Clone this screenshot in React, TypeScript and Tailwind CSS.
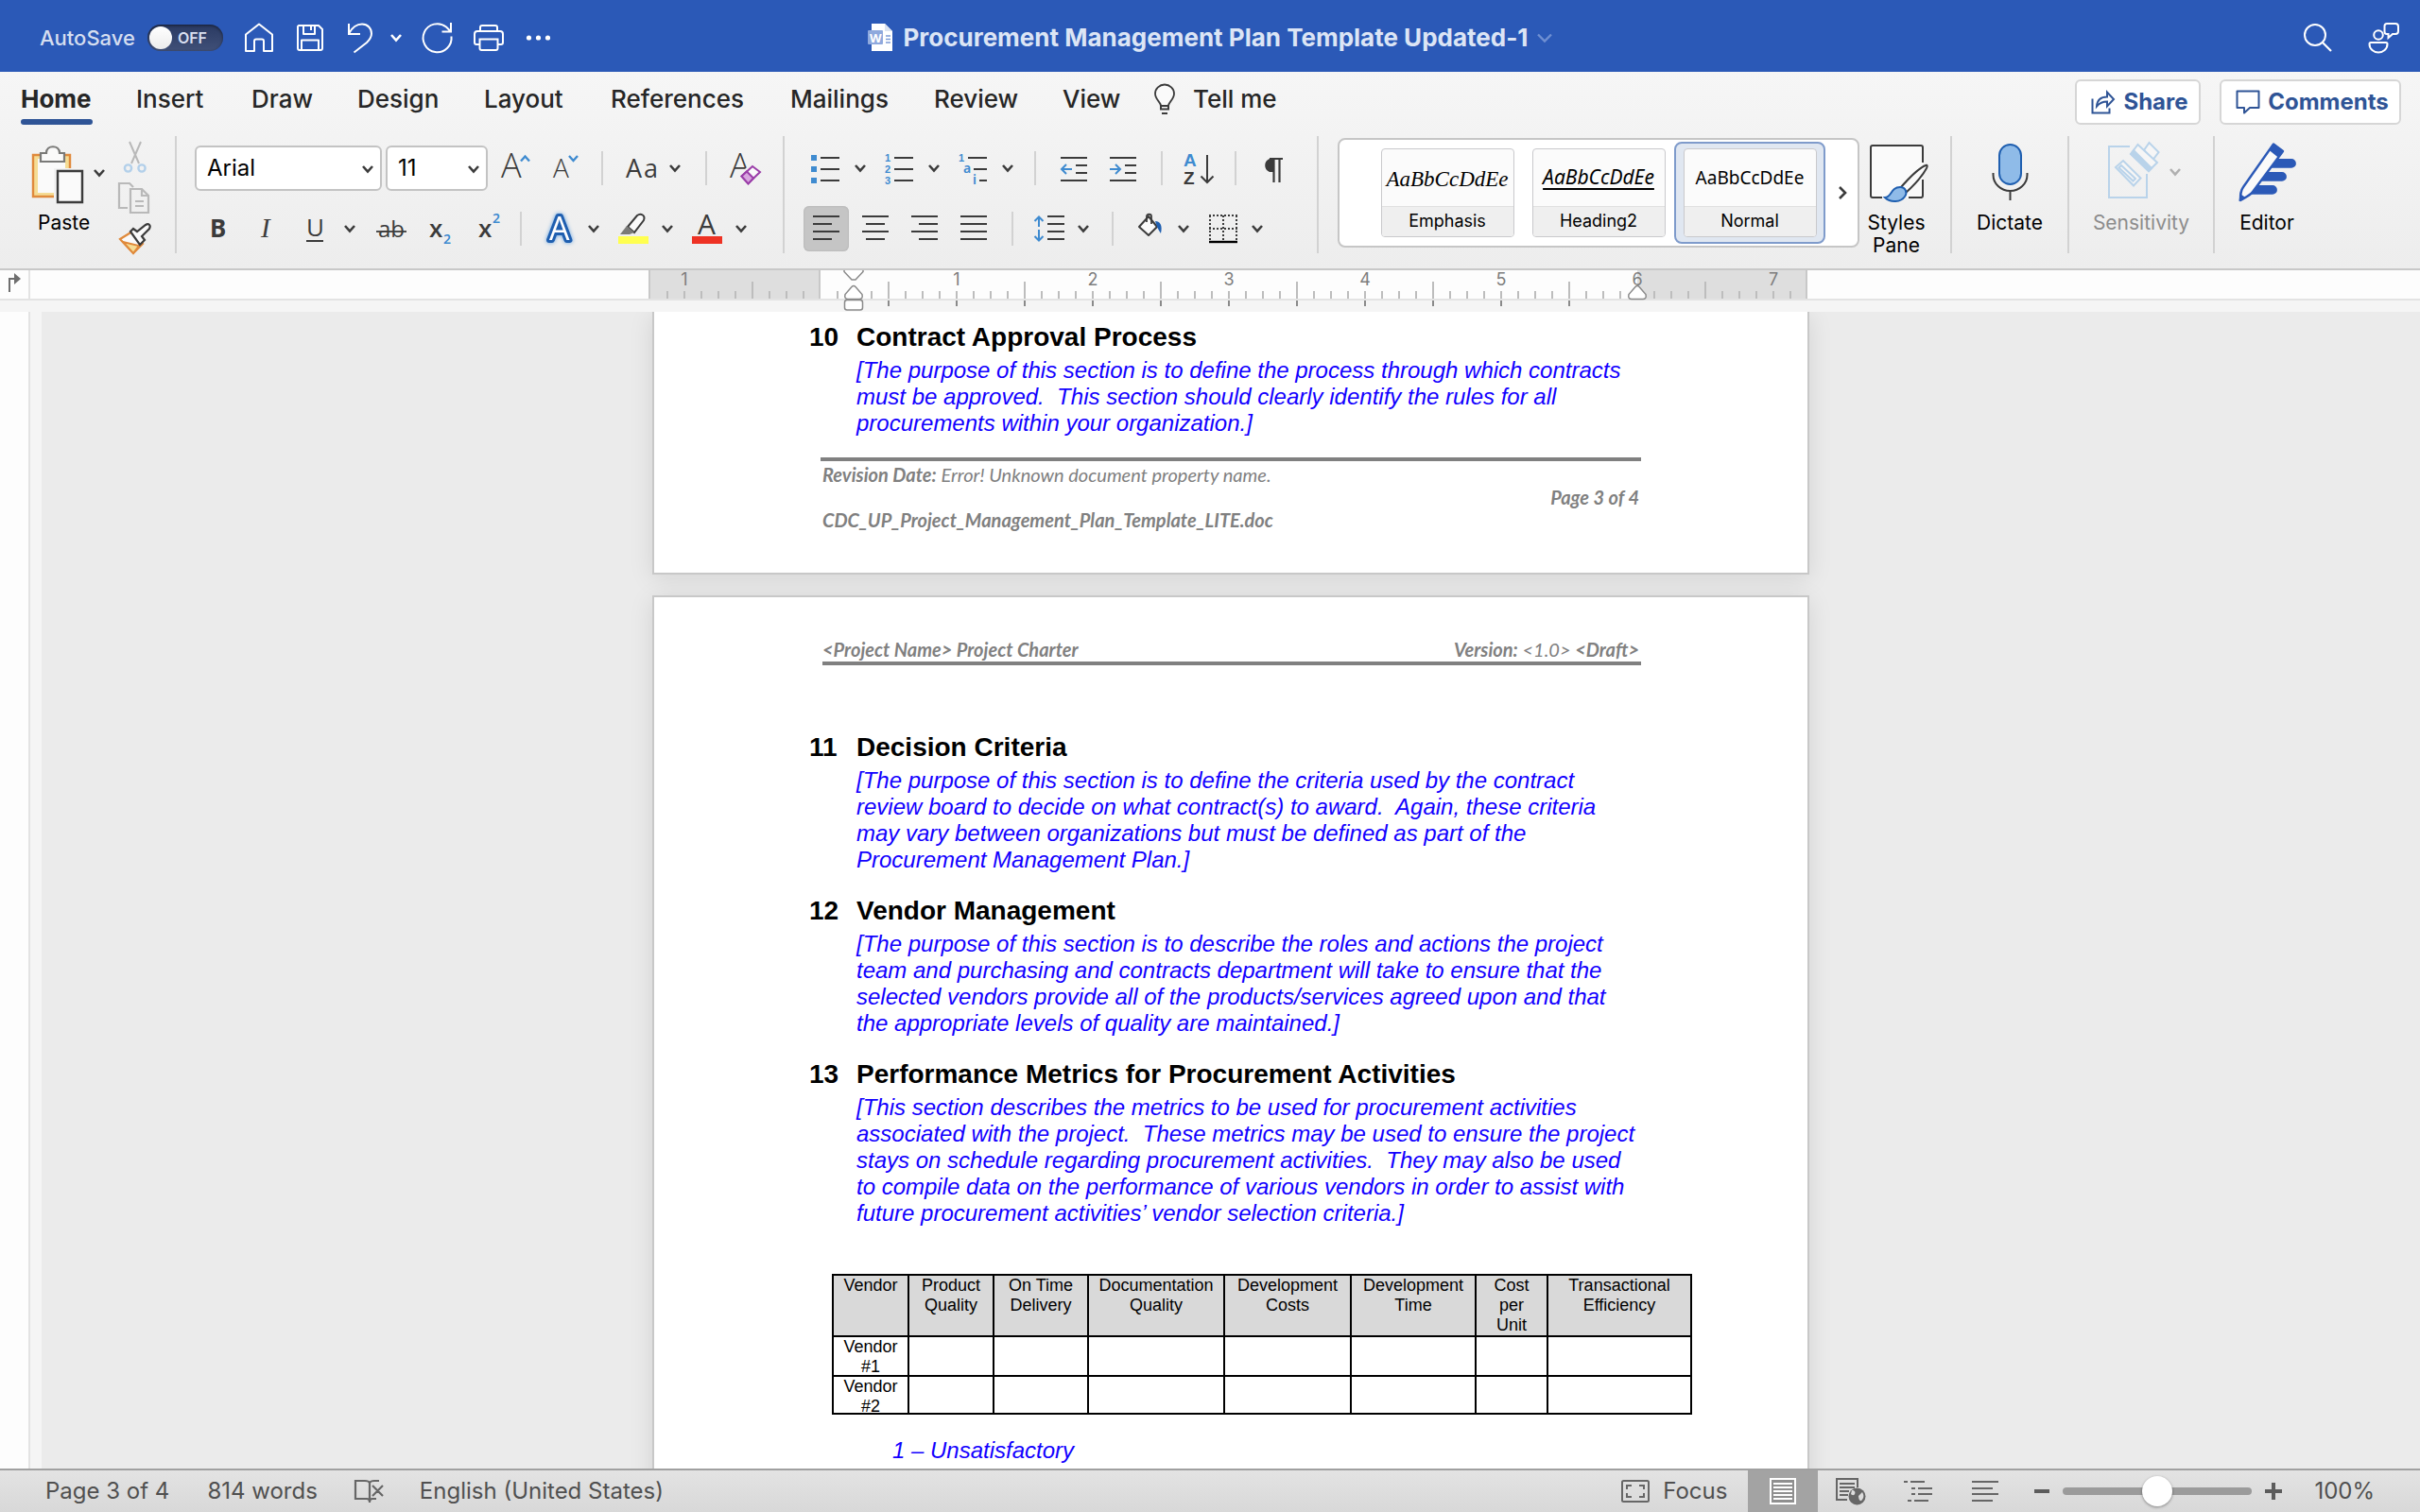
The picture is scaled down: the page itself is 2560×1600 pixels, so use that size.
import React from "react";

type IconProps = { children: React.ReactNode; w?: number; h?: number };

function Icon({ children, w = 32, h = 32 }: IconProps) {
  return (
    <svg width={w} height={h} viewBox={`0 0 ${w} ${h}`} fill="none" aria-hidden="true" className="block shrink-0 overflow-visible">
      {children}
    </svg>
  );
}

function Chevron({ className = "stroke-[#3b3b3b]" }: { className?: string }) {
  return (
    <svg width="14" height="10" viewBox="0 0 14 10" fill="none" aria-hidden="true" className="block shrink-0">
      <path d="M2 2l5 5.5L12 2" strokeWidth="2.6" className={className} />
    </svg>
  );
}

function Tool({ label, children, className = "w-8" }: { label: string; children: React.ReactNode; className?: string }) {
  return (
    <button type="button" aria-label={label} className={`flex h-12 shrink-0 items-center justify-center ${className}`}>
      {children}
    </button>
  );
}

function Split({ label, children }: { label: string; children: React.ReactNode }) {
  return (
    <div className="flex h-12 shrink-0 items-center">
      <Tool label={label}>{children}</Tool>
      <button type="button" aria-label={`${label} options`} className="ml-3 flex h-12 w-4 items-center justify-center">
        <Chevron />
      </button>
    </div>
  );
}

const Sep = () => <div className="h-9 w-0.5 shrink-0 bg-[#d2d2d2]" />;
const GroupSep = () => <div className="mt-2 h-[124px] w-0.5 shrink-0 bg-[#d2d2d2]" />;

function Glyph({
  x,
  y,
  size,
  children,
  fill = "#3b3b3b",
  weight = 400,
  family = "Noto Sans, sans-serif",
  italic = false,
}: {
  x: number;
  y: number;
  size: number;
  children: string;
  fill?: string;
  weight?: number;
  family?: string;
  italic?: boolean;
}) {
  return (
    <text x={x} y={y} fontSize={size} fill={fill} fontWeight={weight} fontFamily={family} fontStyle={italic ? "italic" : "normal"}>
      {children}
    </text>
  );
}

function TitleBar() {
  return (
    <header className="relative flex h-[76px] shrink-0 items-center bg-[#2b59b7] pl-[42px] pr-[22px] pt-1 text-white">
      <label className="flex items-center gap-[13px] text-[22px] font-medium text-[#d5def0]">
        AutoSave
        <span className="relative block h-7 w-20">
          <input
            type="checkbox"
            role="switch"
            aria-label="AutoSave"
            className="block h-7 w-20 appearance-none rounded-full bg-linear-to-b from-[#2a3a62] to-[#405078] shadow-[inset_0_1px_3px_rgba(0,0,0,0.5)]"
          />
          <span className="pointer-events-none absolute left-0.5 top-0.5 h-6 w-6 rounded-full bg-linear-to-b from-white to-[#ececec]" />
          <span className="pointer-events-none absolute left-8 top-0 text-base leading-7 font-semibold text-[#d8dff0]">OFF</span>
        </span>
      </label>
      <nav aria-label="Quick access" className="ml-[22px] flex items-center stroke-white">
        <button type="button" aria-label="Home">
          <Icon>
            <path d="M2 30V12.5L16 1.500l14 11V30h-9V19.500a2 2 0 0 0-2-2h-6a2 2 0 0 0-2 2V30z" strokeWidth="2" strokeLinejoin="round" />
          </Icon>
        </button>
        <button type="button" aria-label="Save" className="ml-[22px]">
          <Icon>
            <path d="M4 3h21l4 4v20a2 2 0 0 1-2 2H5a2 2 0 0 1-2-2V4zM9 3v9h12V3M7 29V18.500h18V29M17 4v4" strokeWidth="2" strokeLinejoin="round" />
          </Icon>
        </button>
        <button type="button" aria-label="Undo" className="ml-[22px]">
          <Icon>
            <path d="M3 1v11h12M3 11.500C6 6 10 1.500 17 1.500c6 0 10 4.500 10 10 0 4-2 6.500-5 9.500L8.500 31.500" strokeWidth="2" />
          </Icon>
        </button>
        <button type="button" aria-label="Undo options" className="ml-3.5">
          <Chevron className="stroke-white" />
        </button>
        <button type="button" aria-label="Redo" className="ml-5">
          <Icon w={34} h={34}>
            <path d="M31.500 15.500A15 15 0 1 1 26 5.500l5 5M31 1v9.500h-9.500" strokeWidth="2" />
          </Icon>
        </button>
        <button type="button" aria-label="Print" className="ml-5">
          <Icon w={34}>
            <path
              d="M8 9V5a2 2 0 0 1 2-2h14a2 2 0 0 1 2 2v4M7 23H4a2 2 0 0 1-2-2v-9a3 3 0 0 1 3-3h24a3 3 0 0 1 3 3v9a2 2 0 0 1-2 2h-3M7.500 17.500h19V27a2 2 0 0 1-2 2h-15a2 2 0 0 1-2-2z"
              strokeWidth="2"
            />
          </Icon>
        </button>
        <button type="button" aria-label="More commands" className="ml-[22px]">
          <Icon w={28}>
            <g fill="white" stroke="none">
              <circle cx="3.500" cy="16" r="2.600" />
              <circle cx="13.500" cy="16" r="2.600" />
              <circle cx="23.500" cy="16" r="2.600" />
            </g>
          </Icon>
        </button>
      </nav>
      <div className="pointer-events-none absolute inset-x-0 top-1 flex h-[72px] items-center justify-center">
        <Icon w={28}>
          <path d="M5 1h14l8 8v21H5z" fill="white" />
          <path d="M19 1l8 8h-8z" fill="#dbe3f2" />
          <path d="M20 14h5M20 17.500h5M20 21h5" stroke="#7d9bd6" strokeWidth="1.500" />
          <rect x="1" y="8" width="16" height="15" rx="1" fill="#8fa9dd" />
          <Glyph x={3} y={20.5} size={13} fill="#ffffff" weight={700}>W</Glyph>
        </Icon>
        <h1 className="ml-2.5 text-[26px] leading-8 font-bold text-[#dce5f5]">Procurement Management Plan Template Updated-1</h1>
        <svg width="18" height="12" viewBox="0 0 18 12" fill="none" className="ml-2" aria-hidden="true">
          <path d="M2 2.500l7 7 7-7" stroke="#6f8fd2" strokeWidth="2.400" />
        </svg>
      </div>
      <div className="ml-auto flex items-center gap-9">
        <button type="button" aria-label="Search">
          <Icon>
            <circle cx="13" cy="13" r="11" stroke="white" strokeWidth="2" />
            <path d="M20.500 20.500L30 30" stroke="white" strokeWidth="2.200" />
          </Icon>
        </button>
        <button type="button" aria-label="Account">
          <Icon w={34} h={34}>
            <g stroke="white" strokeWidth="2">
              <circle cx="12" cy="14" r="4.800" />
              <path d="M4 22h16a1.500 1.500 0 0 1 1.500 1.500C21.500 29 17 32.500 12 32.500S2.500 29 2.500 23.500A1.500 1.500 0 0 1 4 22z" />
              <path d="M21 2h9a3 3 0 0 1 3 3v5a3 3 0 0 1-3 3h-3l-4.500 4V13H21a2.500 2.500 0 0 1-2.500-2.500V4.500A2.500 2.500 0 0 1 21 2z" />
            </g>
          </Icon>
        </button>
      </div>
    </header>
  );
}

const tabs: { name: string; w: string }[] = [
  { name: "Insert", w: "w-[122px]" },
  { name: "Draw", w: "w-[112px]" },
  { name: "Design", w: "w-[134px]" },
  { name: "Layout", w: "w-[134px]" },
  { name: "References", w: "w-[190px]" },
  { name: "Mailings", w: "w-[152px]" },
  { name: "Review", w: "w-[136px]" },
  { name: "View", w: "w-[96px]" },
];

function TabRow() {
  return (
    <div className="flex h-[60px] items-start pl-[22px] pr-5 text-[26px] leading-[34px] font-medium text-[#262626]">
      <button type="button" className="mt-3 flex w-[122px] flex-col items-start font-bold">
        <span>Home</span>
        <span className="mt-1 h-1.5 w-[76px] rounded-full bg-[#2f5496]" />
      </button>
      {tabs.map((t) => (
        <button key={t.name} type="button" className={`mt-3 text-left ${t.w}`}>
          {t.name}
        </button>
      ))}
      <button type="button" className="mt-3 flex items-center gap-[18px]">
        <Icon w={24}>
          <path d="M8 23c0-4-6-6.500-6-13a10 9.500 0 0 1 20 0c0 6.500-6 9-6 13z" stroke="#3b3b3b" strokeWidth="1.800" fill="#fafafa" />
          <path d="M8 23v3.500h8V23M9 31h6" stroke="#3b3b3b" strokeWidth="2" />
        </Icon>
        Tell me
      </button>
      <div className="ml-auto mt-2 flex gap-5 font-bold text-[#2f5496]">
        <button type="button" className="flex h-12 w-[133px] items-center justify-center gap-2 rounded-md border-2 border-[#d6d6d6] bg-white pl-1 text-2xl">
          <Icon w={26} h={26}>
            <path d="M1.500 9.500v15h18v-5" stroke="#2f5496" strokeWidth="2" />
            <path d="M6 17.500c.500-7 5-10 11-10V2.500l7 7.500-7 7.500v-5C12 12.500 9 14 6 17.500z" stroke="#2f5496" strokeWidth="2" />
          </Icon>
          Share
        </button>
        <button type="button" className="flex h-12 w-[192px] items-center justify-center gap-2 rounded-md border-2 border-[#d6d6d6] bg-white pl-1 text-2xl">
          <Icon w={26} h={26}>
            <path d="M1.500 1.500h23v17.500H15l-6 5.500V19H1.500z" stroke="#2f5496" strokeWidth="2" strokeLinejoin="round" />
          </Icon>
          Comments
        </button>
      </div>
    </div>
  );
}

function PasteGroup() {
  return (
    <div className="flex w-[185px] shrink-0 pl-7 text-black">
      <div className="flex w-[84px] flex-col">
        <div className="flex items-center pt-3.5">
          <button type="button" aria-label="Paste clipboard">
            <Icon w={66} h={66}>
              <path d="M7 14h39v44H7z" fill="#f5dc94" stroke="#e08a3c" strokeWidth="2.400" />
              <path d="M12 18h29v36H12z" fill="#fafafa" />
              <path d="M15 21v-9h6c0-9 14-9 14 0h5v9z" fill="#fafafa" stroke="#7a7a78" strokeWidth="2.200" />
              <path d="M29 28h34v37H29z" fill="#f2f2f2" />
              <path d="M33 31h26v33H33z" fill="#fafafa" stroke="#3b3b3b" strokeWidth="2.400" />
            </Icon>
          </button>
          <button type="button" aria-label="Paste options" className="ml-1">
            <Chevron />
          </button>
        </div>
        <span className="ml-3 mt-1 text-[21px] leading-8">Paste</span>
      </div>
      <div className="ml-3 flex flex-col gap-2 pt-3">
        <button type="button" aria-label="Cut">
          <Icon w={36} h={36}>
            <path d="M13 2l10 23M25 2L15 25" stroke="#b9b9b9" strokeWidth="2" />
            <circle cx="11.500" cy="30" r="3.600" stroke="#b3d0ea" strokeWidth="2.400" />
            <circle cx="26" cy="30" r="3.600" stroke="#b3d0ea" strokeWidth="2.400" />
          </Icon>
        </button>
        <button type="button" aria-label="Copy">
          <Icon w={36} h={36}>
            <path d="M11 28H2V2h11l4 4" stroke="#b9b9b9" strokeWidth="2.200" />
            <path d="M14 8h12l7 7v18H14zM26 8v7h7M19 21h9M19 26h9" stroke="#b9b9b9" strokeWidth="2.200" />
          </Icon>
        </button>
        <button type="button" aria-label="Format Painter">
          <Icon w={36} h={36}>
            <path d="M3 17l13-8 11 13-10 10z" fill="#fafafa" stroke="#e08a3c" strokeWidth="2.200" />
            <path d="M6 20l17 4-6 8z" fill="#f5dc94" stroke="#e08a3c" strokeWidth="2" />
            <path d="M14 9l3-3 4 3 9-7c3-2 6 0 4 4l-8 8 3 4-5 5z" fill="#fafafa" stroke="#3b3b3b" strokeWidth="2.200" />
          </Icon>
        </button>
      </div>
    </div>
  );
}

function Dropdown({ label, value, className }: { label: string; value: string; className: string }) {
  return (
    <div className={`relative h-12 shrink-0 ${className}`}>
      <select
        aria-label={label}
        defaultValue={value}
        className="h-12 w-full appearance-none rounded-md border-2 border-[#c3c3c3] bg-white pl-[11px] text-2xl text-black"
      >
        <option>{value}</option>
      </select>
      <span className="pointer-events-none absolute right-2 top-5">
        <Chevron />
      </span>
    </div>
  );
}

function FontGroup() {
  return (
    <div className="flex w-[641px] shrink-0 flex-col gap-4 pl-[19px] pt-[18px]">
      <div className="flex items-center">
        <Dropdown label="Font" value="Arial" className="w-[198px]" />
        <Dropdown label="Font Size" value="11" className="ml-1 w-[108px]" />
        <div className="ml-3.5 flex items-center gap-[22px]">
          <Tool label="Increase Font Size">
            <Icon>
              <Glyph x={0} y={26} size={36} family="Open Sans, sans-serif" weight={300}>A</Glyph>
              <path d="M21 8.500l4.500-5 4.500 5" stroke="#3f8bd0" strokeWidth="2.400" />
            </Icon>
          </Tool>
          <Tool label="Decrease Font Size">
            <Icon>
              <Glyph x={1} y={26} size={28} family="Open Sans, sans-serif" weight={300}>A</Glyph>
              <path d="M18 3l4.500 5L27 3" stroke="#3f8bd0" strokeWidth="2.400" />
            </Icon>
          </Tool>
        </div>
        <div className="ml-5 flex items-center gap-6">
          <Sep />
          <Split label="Change Case">
            <Icon w={32}>
              <Glyph x={0} y={26} size={27} family="Open Sans, sans-serif">A</Glyph>
              <Glyph x={19} y={26} size={27} family="Open Sans, sans-serif">a</Glyph>
            </Icon>
          </Split>
          <Sep />
          <Tool label="Clear Formatting">
            <Icon>
              <Glyph x={0} y={26} size={36} family="Open Sans, sans-serif" weight={300}>A</Glyph>
              <path d="M9 23L24 10l10 8-14 18z" fill="#f1f1f1" />
              <path d="M12.500 24.500L24 14l8 6-12.500 12z" fill="#fafafa" stroke="#9a3da8" strokeWidth="2" />
              <path d="M12.500 24.500l5.500-5 7 7-5.500 6z" fill="#d8a6df" stroke="#9a3da8" strokeWidth="2" />
            </Icon>
          </Tool>
        </div>
      </div>
      <div className="flex items-center pl-2">
        <div className="flex items-center gap-5">
          <Tool label="Bold">
            <Icon>
              <Glyph x={8} y={25} size={26} weight={700}>B</Glyph>
            </Icon>
          </Tool>
          <Tool label="Italic">
            <Icon>
              <Glyph x={10} y={25} size={29} family="Liberation Serif, serif" italic>I</Glyph>
            </Icon>
          </Tool>
          <Split label="Underline">
            <Icon>
              <Glyph x={6} y={24} size={26} family="Open Sans, sans-serif">U</Glyph>
              <path d="M6 29h18" stroke="#3b3b3b" strokeWidth="2" />
            </Icon>
          </Split>
          <Tool label="Strikethrough">
            <Icon>
              <Glyph x={2} y={25} size={24} family="Open Sans, sans-serif">ab</Glyph>
              <path d="M0 19h32" stroke="#3b3b3b" strokeWidth="1.800" />
            </Icon>
          </Tool>
          <Tool label="Subscript">
            <Icon>
              <Glyph x={4} y={25} size={26} weight={600} family="Open Sans, sans-serif">x</Glyph>
              <Glyph x={19} y={32} size={14} fill="#3f8bd0" weight={600}>2</Glyph>
            </Icon>
          </Tool>
          <Tool label="Superscript">
            <Icon>
              <Glyph x={4} y={25} size={26} weight={600} family="Open Sans, sans-serif">x</Glyph>
              <Glyph x={19} y={10} size={14} fill="#3f8bd0" weight={600}>2</Glyph>
            </Icon>
          </Tool>
        </div>
        <div className="ml-4 flex items-center gap-6">
          <Sep />
          <div className="flex items-center gap-[18px]">
            <Split label="Text Effects">
              <svg width="32" height="32" viewBox="0 0 32 32" aria-hidden="true" className="block overflow-visible drop-shadow-[0_0_2px_#5f9fe0]">
                <text
                  x="5"
                  y="28"
                  fontSize="34"
                  fontWeight="400"
                  fontFamily="Open Sans, sans-serif"
                  paintOrder="stroke"
                  stroke="#1f5fb0"
                  strokeWidth="6"
                  strokeLinejoin="round"
                  fill="#ffffff"
                >
                  A
                </text>
              </svg>
            </Split>
            <Split label="Text Highlight Color">
              <Icon>
                <path d="M10 14L20 2c4-3 9 0 7 5L17 20z" fill="#fafafa" stroke="#3b3b3b" strokeWidth="2" />
                <path d="M9 13l8 7-5 2H2z" fill="#7a7a78" />
                <path d="M0 24h32v8H0z" fill="#ffff50" />
              </Icon>
            </Split>
            <Split label="Font Color">
              <Icon>
                <Glyph x={6} y={22} size={30} family="Open Sans, sans-serif">A</Glyph>
                <path d="M0 24h32v8H0z" fill="#ee3224" />
              </Icon>
            </Split>
          </div>
        </div>
      </div>
    </div>
  );
}

const dark = "#3b3b3b";
const blue = "#3f8bd0";

function ParagraphGroup() {
  return (
    <div className="flex w-[563px] shrink-0 flex-col gap-4 pl-5 pt-[18px]">
      <div className="flex items-center pl-2">
        <div className="flex gap-[18px]">
          <Split label="Bullets">
            <Icon>
              <path d="M0 2h6v6H0zM0 14h6v6H0zM0 26h6v6H0z" fill={blue} />
              <path d="M10 5h20M10 17h20M10 29h20" stroke={dark} strokeWidth="2" />
            </Icon>
          </Split>
          <Split label="Numbering">
            <Icon>
              <Glyph x={0} y={9} size={11} fill={blue} weight={600} family="Liberation Sans, sans-serif">1</Glyph>
              <Glyph x={0} y={21} size={11} fill={blue} weight={600} family="Liberation Sans, sans-serif">2</Glyph>
              <Glyph x={0} y={33} size={11} fill={blue} weight={600} family="Liberation Sans, sans-serif">3</Glyph>
              <path d="M10 5h20M10 17h20M10 29h20" stroke={dark} strokeWidth="2" />
            </Icon>
          </Split>
          <Split label="Multilevel List">
            <Icon>
              <Glyph x={0} y={9} size={11} fill={blue} weight={600} family="Liberation Sans, sans-serif">1</Glyph>
              <Glyph x={5} y={21} size={14} fill={blue} weight={600}>a</Glyph>
              <Glyph x={15} y={33} size={14} fill={blue} weight={600}>i</Glyph>
              <path d="M10 5h20M16 17h14M22 29h8" stroke={dark} strokeWidth="2" />
            </Icon>
          </Split>
        </div>
        <div className="ml-5 flex items-center gap-[22px]">
          <Sep />
          <div className="flex gap-5 pl-1">
            <Tool label="Decrease Indent">
              <Icon>
                <path d="M0 5h28M16 13h12M16 21h12M0 29h28" stroke={dark} strokeWidth="2" />
                <path d="M12 17H1M6 12l-5 5 5 5" stroke={blue} strokeWidth="2" />
              </Icon>
            </Tool>
            <Tool label="Increase Indent">
              <Icon>
                <path d="M0 5h28M16 13h12M16 21h12M0 29h28" stroke={dark} strokeWidth="2" />
                <path d="M0 17h11M6 12l5 5-5 5" stroke={blue} strokeWidth="2" />
              </Icon>
            </Tool>
          </div>
          <Sep />
          <Tool label="Sort">
            <Icon w={32} h={36}>
              <Glyph x={0} y={16} size={19} fill={blue} weight={600} family="Liberation Sans, sans-serif">A</Glyph>
              <Glyph x={0} y={35} size={19} weight={600} family="Liberation Sans, sans-serif">Z</Glyph>
              <path d="M25 4v29M18.500 26.500L25 33l6.500-6.500" stroke={dark} strokeWidth="2" />
            </Icon>
          </Tool>
          <Sep />
          <Tool label="Show Paragraph Marks">
            <Icon>
              <path d="M26 6H13a7.500 7.500 0 0 0 0 14h4V6z" fill={dark} />
              <path d="M17.500 5v26M23.500 5v26M13 6h14" stroke={dark} strokeWidth="2.200" />
            </Icon>
          </Tool>
        </div>
      </div>
      <div className="flex items-center">
        <div className="flex gap-1">
          <Tool label="Align Left" className="w-12 rounded-md bg-[#c5c5c5] shadow-[inset_0_0_2px_#a8a8a8]">
            <Icon w={28}>
              <path d="M0 3h28M0 11h20M0 19h28M0 27h20" stroke={dark} strokeWidth="2" />
            </Icon>
          </Tool>
          <Tool label="Center" className="w-12">
            <Icon w={28}>
              <path d="M0 3h28M4 11h20M0 19h28M4 27h20" stroke={dark} strokeWidth="2" />
            </Icon>
          </Tool>
          <Tool label="Align Right" className="w-12">
            <Icon w={28}>
              <path d="M0 3h28M8 11h20M0 19h28M8 27h20" stroke={dark} strokeWidth="2" />
            </Icon>
          </Tool>
          <Tool label="Justify" className="w-12">
            <Icon w={28}>
              <path d="M0 3h28M0 11h28M0 19h28M0 27h28" stroke={dark} strokeWidth="2" />
            </Icon>
          </Tool>
        </div>
        <div className="ml-4 flex items-center gap-[22px]">
          <Sep />
          <Split label="Line Spacing">
            <Icon>
              <path d="M14 3h18M14 11h18M14 19h18M14 27h18" stroke={dark} strokeWidth="2" />
              <path d="M5 3v11M0.500 8L5 3.500 9.500 8M5 17v11M0.500 24L5 28.500 9.500 24" stroke={blue} strokeWidth="2" />
            </Icon>
          </Split>
          <Sep />
          <div className="flex gap-[18px]">
            <Split label="Shading">
              <Icon>
                <path d="M5 14L15 3l9 11-9 9z" fill="#fafafa" stroke={dark} strokeWidth="2" strokeLinejoin="round" />
                <path d="M13 9V3c0-3 5-3 5 0v8" stroke={dark} strokeWidth="1.800" />
                <path d="M22 8c5 0 8 4 6 13-2-3-3-5-4-7z" fill="#1f5fb0" />
              </Icon>
            </Split>
            <Split label="Borders">
              <Icon>
                <path d="M1 2h30M1 16h30" stroke={dark} strokeWidth="2" strokeDasharray="2 2" />
                <path d="M2 2v26M16 2v26M30 2v26" stroke={dark} strokeWidth="2" strokeDasharray="2 2" />
                <path d="M1 30h30" stroke="#000" strokeWidth="2.400" />
              </Icon>
            </Split>
          </div>
        </div>
      </div>
    </div>
  );
}

function StyleCard({ name, sample, selected = false }: { name: string; sample: string; selected?: boolean }) {
  return (
    <button
      type="button"
      aria-pressed={selected}
      className={`flex h-[108px] w-40 items-center justify-center rounded-lg border-2 ${
        selected ? "border-[#7f9bcb] bg-[#e0e7f1]" : "border-transparent"
      }`}
    >
      <span className="flex h-[94px] w-[141px] flex-col overflow-hidden rounded-sm border border-[#c9c9cc] bg-[#fbfbfb] text-black">
        <span className={`flex h-[61px] items-center justify-center border-b border-[#e0e0e0] ${sample}`}>AaBbCcDdEe</span>
        <span className="flex-1 bg-[#efefef] text-lg leading-[30px]">{name}</span>
      </span>
    </button>
  );
}

function StyleGallery() {
  return (
    <div className="mt-2.5 ml-5 flex h-[116px] w-[552px] shrink-0 items-center rounded-lg border-2 border-[#c6c6c6] bg-white pl-[34px]">
      <StyleCard name="Emphasis" sample="font-['Liberation_Serif'] text-[23px] italic pt-1" />
      <StyleCard name="Heading2" sample="font-['Noto_Sans'] text-[21px] italic underline decoration-2 underline-offset-4" />
      <StyleCard name="Normal" sample="font-['Noto_Sans'] text-[19px]" selected />
      <button type="button" aria-label="More styles" className="ml-3">
        <svg width="14" height="16" viewBox="0 0 14 16" fill="none" aria-hidden="true">
          <path d="M3 2l6 6-6 6" stroke={dark} strokeWidth="2.600" />
        </svg>
      </button>
    </div>
  );
}

function BigButton({ label, className, children }: { label: string; className: string; children: React.ReactNode }) {
  return (
    <button type="button" className={`flex shrink-0 flex-col items-center pt-3 text-[21px] leading-6 ${className}`}>
      {children}
      <span className="mt-2">{label}</span>
    </button>
  );
}

function RightGroups() {
  return (
    <>
      <BigButton label="Styles Pane" className="mr-[18px] w-[78px] text-black">
        <Icon w={66} h={68}>
          <path d="M15 61H8a2 2 0 0 1-2-2V8a2 2 0 0 1 2-2h51a2 2 0 0 1 2 2v51a2 2 0 0 1-2 2z" fill="#fafafa" />
          <path d="M18 61H8a2 2 0 0 1-2-2V8a2 2 0 0 1 2-2h51a2 2 0 0 1 2 2v16M61 42v17a2 2 0 0 1-2 2H46" stroke={dark} strokeWidth="2" />
          <path d="M38 50C46 41 56 30 64 27c2-1 2 1 1 3-5 9-13 18-22 26z" fill="#fafafa" stroke={dark} strokeWidth="2" />
          <path d="M21 61c7 0 6-11 16-11 6 0 8 6 5 10-4 6-15 7-21 1z" fill="#8fbbe8" stroke="#1f5fb0" strokeWidth="2" />
        </Icon>
      </BigButton>
      <GroupSep />
      <BigButton label="Dictate" className="w-[122px] text-black">
        <Icon w={44} h={68}>
          <rect x="11" y="5" width="23" height="42" rx="11.500" fill="#8fbbe8" stroke="#1f5fb0" strokeWidth="2" />
          <path d="M4.500 35v2a18 17 0 0 0 36 0v-2M22.500 54v10" stroke={dark} strokeWidth="2" />
        </Icon>
      </BigButton>
      <GroupSep />
      <BigButton label="Sensitivity" className="w-[152px] text-[#8c8c8c]">
        <span className="flex items-center gap-2">
          <Icon w={64} h={68}>
            <g stroke="#b9d3ea" strokeWidth="2">
              <path d="M31 7H9v54h40V36" />
              <path d="M16 29l8-7 18.500 18.500L35 48.500z" fill="#f6f6f6" />
              <path d="M22 27l15 14-2.500 2.500-15-14z" />
              <path d="M46 11l5.500-8 10 10-6 8z" fill="#f6f6f6" />
              <path d="M32 15l7.500-10L60 24l-9 9z" fill="#f6f6f6" />
              <path d="M32 15l3-4 19 19-3 3z" fill="#b9d3ea" />
            </g>
          </Icon>
          <Chevron className="stroke-[#b0b0b0]" />
        </span>
      </BigButton>
      <GroupSep />
      <BigButton label="Editor" className="w-[110px] text-black">
        <Icon w={66} h={68}>
          <path d="M40 20h19a4.900 4.900 0 0 1 0 9.800H32zM32 34h17a4.900 4.900 0 0 1 0 9.800H22zM24 48h15a4.900 4.900 0 0 1 0 9.800H12z" fill="#2b59b7" />
          <path d="M40 4.500l10 7.500-32 43c-3 4-8 6-13 9 0-6 0-10 3-14z" fill="#fafafa" stroke="#2b59b7" strokeWidth="2.400" strokeLinejoin="round" />
          <path d="M40 4l10.500 8-5 7-10-8zM4.500 57l6 4-7 4z" fill="#2b59b7" />
        </Icon>
      </BigButton>
    </>
  );
}

const ticks = Array.from({ length: 67 }, (_, i) => i - 9);

function IndentMarker({ kind }: { kind: "left" | "right" }) {
  return (
    <svg width="22" height="44" viewBox="0 0 22 44" fill="white" stroke="#8a8a8a" strokeWidth="1.500" aria-hidden="true" className="relative z-10 block">
      {kind === "left" && <path d="M1 0v1.500l8 8.500h4l8-8.500V0" />}
      <path d="M11 16.500c1 0 2 1 2 1l7 8c1 4-1 5-3 5H5c-2 0-4-1-3-5l7-8s1-1 2-1z" />
      {kind === "left" && <rect x="1.500" y="31.500" width="19" height="10.500" rx="2.500" />}
    </svg>
  );
}

function Ruler() {
  return (
    <div className="flex h-[46px] shrink-0 border-t-2 border-[#c8c8c8] bg-[#f5f5f5]">
      <div className="h-8 w-8 shrink-0 border-r-2 border-b-2 border-[#e3e3e3] bg-[#fdfdfd]">
        <svg width="28" height="28" viewBox="0 0 28 28" fill="none" aria-hidden="true">
          <path d="M10 23V9h8" stroke="#6e6e6e" strokeWidth="2" />
          <path d="M15 3l7 6-7 6z" fill="#6e6e6e" />
        </svg>
      </div>
      <div className="flex h-8 flex-1 justify-center border-b-2 border-[#e3e3e3] bg-[#fdfdfd] pl-3 pr-1.5">
        <div className="relative h-[30px] w-[1226px]">
          <div className="flex h-[30px] justify-between">
            <div className="w-[182px] border-x-2 border-[#c8c8c8] bg-[#dedede]" />
            <div className="w-[180px] border-r-2 border-[#c8c8c8] bg-[#dedede]" />
          </div>
          <div className="absolute left-[11px] top-0 flex">
            {ticks.map((t) => {
              const inch = t % 8 === 0;
              const half = t % 4 === 0 && !inch;
              const hidden = t === 0 || t === 2 || t === 48;
              return (
                <div key={t} className="flex h-[38px] w-[18px] flex-col items-center">
                  <div className="flex h-[22px] w-full flex-col items-center justify-between">
                    <span className="h-3 text-lg leading-5 text-[#7d7d7d]">{inch && t !== 0 ? Math.abs(t / 8) : ""}</span>
                    {half && <span className="h-2.5 w-0.5 bg-[#bdbdbd]" />}
                  </div>
                  <span className={`h-2 w-0.5 ${hidden ? "" : "bg-[#bdbdbd]"}`} />
                  {t > 0 && t < 48 && t % 4 === 0 && <span className="mt-0.5 h-1.5 w-0.5 bg-[#8a8a8a]" />}
                </div>
              );
            })}
          </div>
          <div className="absolute left-[206px] top-0">
            <IndentMarker kind="left" />
          </div>
          <div className="absolute left-[1035px] top-0">
            <IndentMarker kind="right" />
          </div>
        </div>
      </div>
    </div>
  );
}

function Section({ num, title, lines }: { num: number; title: string; lines: string[] }) {
  return (
    <section className="pl-[164px]">
      <h2 className="flex text-[28px] leading-8 font-bold text-black">
        <span className="w-[50px]">{num}</span>
        {title}
      </h2>
      <p className="mt-[5px] pl-[50px] text-2xl leading-7 italic text-[#1200ff]">
        {lines.map((l) => (
          <span key={l} className="block whitespace-pre">
            {l}
          </span>
        ))}
      </p>
    </section>
  );
}

const columns: { name: string; w: string }[] = [
  { name: "Vendor", w: "w-20" },
  { name: "Product Quality", w: "w-[90px]" },
  { name: "On Time Delivery", w: "w-[100px]" },
  { name: "Documentation Quality", w: "w-36" },
  { name: "Development Costs", w: "w-[134px]" },
  { name: "Development Time", w: "w-[132px]" },
  { name: "Cost per Unit", w: "w-[76px]" },
  { name: "Transactional Efficiency", w: "w-[152px]" },
];

const vendors: { id: string; h: string }[] = [
  { id: "#1", h: "h-10" },
  { id: "#2", h: "h-[38px]" },
];

function MetricsTable() {
  return (
    <table className="mt-[50px] ml-[188px] w-[908px] table-fixed border-collapse text-center text-lg leading-[21px] text-black">
      <thead>
        <tr className="h-16 bg-[#d9d9d9] align-top">
          {columns.map((c) => (
            <th key={c.name} scope="col" className={`border-2 border-black p-0 px-1.5 font-normal ${c.w}`}>
              {c.name}
            </th>
          ))}
        </tr>
      </thead>
      <tbody>
        {vendors.map((v) => (
          <tr key={v.id} className="align-top">
            <th scope="row" className="border-2 border-black p-0 font-normal">
              <div className={v.h}>
                Vendor
                <br />
                {v.id}
              </div>
            </th>
            {columns.slice(1).map((c) => (
              <td key={c.name} className="border-2 border-black p-0" />
            ))}
          </tr>
        ))}
      </tbody>
    </table>
  );
}

function DocumentArea() {
  return (
    <main className="flex min-h-0 flex-1 overflow-hidden bg-[#ebebeb]">
      <div className="-mt-3 w-8 shrink-0 border-r-2 border-[#e3e3e3] bg-[#fdfdfd]" />
      <div className="w-3 shrink-0 bg-[#f5f5f5]" />
      <div className="flex flex-1 flex-col items-center gap-[22px] font-['Liberation_Sans']">
        <article className="h-[278px] w-[1224px] shrink-0 border-2 border-t-0 border-[#c8c8c8] bg-white pt-[11px] shadow-[0_4px_24px_rgba(0,0,0,0.10)]">
          <Section
            num={10}
            title="Contract Approval Process"
            lines={[
              "[The purpose of this section is to define the process through which contracts",
              "must be approved.  This section should clearly identify the rules for all",
              "procurements within your organization.]",
            ]}
          />
          <footer className="mt-[22px] ml-44 flex w-[868px] items-center justify-between border-t-4 border-[#808080] px-0.5 pt-0.5 font-['Lato'] text-xl leading-6 italic text-[#808080]">
            <div className="flex flex-col gap-6">
              <span>
                <b>Revision Date:</b> Error! Unknown document property name.
              </span>
              <b>CDC_UP_Project_Management_Plan_Template_LITE.doc</b>
            </div>
            <b>Page 3 of 4</b>
          </footer>
        </article>
        <article className="w-[1224px] shrink-0 border-2 border-[#c8c8c8] bg-white pt-[43px] pb-20 shadow-[0_4px_24px_rgba(0,0,0,0.10)]">
          <header className="ml-[178px] flex h-[29px] w-[866px] justify-between border-b-4 border-[#808080] pr-0.5 font-['Lato'] text-xl leading-6 italic text-[#808080]">
            <b>&lt;Project Name&gt; Project Charter</b>
            <span>
              <b>Version:</b> &lt;1.0&gt; <b>&lt;Draft&gt;</b>
            </span>
          </header>
          <div className="mt-[71px] flex flex-col gap-6">
            <Section
              num={11}
              title="Decision Criteria"
              lines={[
                "[The purpose of this section is to define the criteria used by the contract",
                "review board to decide on what contract(s) to award.  Again, these criteria",
                "may vary between organizations but must be defined as part of the",
                "Procurement Management Plan.]",
              ]}
            />
            <Section
              num={12}
              title="Vendor Management"
              lines={[
                "[The purpose of this section is to describe the roles and actions the project",
                "team and purchasing and contracts department will take to ensure that the",
                "selected vendors provide all of the products/services agreed upon and that",
                "the appropriate levels of quality are maintained.]",
              ]}
            />
            <Section
              num={13}
              title="Performance Metrics for Procurement Activities"
              lines={[
                "[This section describes the metrics to be used for procurement activities",
                "associated with the project.  These metrics may be used to ensure the project",
                "stays on schedule regarding procurement activities.  They may also be used",
                "to compile data on the performance of various vendors in order to assist with",
                "future procurement activities’ vendor selection criteria.]",
              ]}
            />
          </div>
          <MetricsTable />
          <p className="mt-6 ml-[252px] text-2xl leading-7 italic text-[#1200ff]">1 – Unsatisfactory</p>
        </article>
      </div>
    </main>
  );
}

function StatusBar() {
  const g = "#666666";
  return (
    <footer className="z-10 flex h-[46px] shrink-0 items-center border-t-2 border-[#a0a0a0] bg-linear-to-b from-[#e3e3e3] to-[#d8d8d8] pl-12 pr-12 text-2xl text-[#505050]">
      <button type="button">Page 3 of 4</button>
      <button type="button" className="ml-10">814 words</button>
      <button type="button" aria-label="Proofing" className="ml-[38px]">
        <Icon w={34} h={28}>
          <path d="M17 26V5c-1-2-3-2-5-2H2v19h12c2 0 3 1 3 3M17 5c1-2 3-2 5-2h5M17 25c0-2 1-3 3-3h4M20 8l11 11M31 8L20 19" stroke={g} strokeWidth="2.200" />
        </Icon>
      </button>
      <button type="button" className="ml-9">English (United States)</button>
      <div className="ml-auto flex items-center">
        <button type="button" className="flex items-center gap-3.5">
          <Icon w={30} h={26}>
            <rect x="1" y="2" width="28" height="22" rx="1.500" stroke={g} strokeWidth="2" />
            <path d="M6 11V7h5M19 7h5v4M24 15v4h-5M11 19H6v-4" stroke={g} strokeWidth="2" />
          </Icon>
          Focus
        </button>
        <button type="button" aria-label="Print Layout" aria-pressed="true" className="ml-[22px] flex h-11 w-[74px] items-center justify-center bg-[#a3a3a3]">
          <Icon w={30} h={30}>
            <path d="M2 2h26v26H2z" fill="#8f8f8f" stroke="white" strokeWidth="2" />
            <path d="M5 7h20M5 11h20M5 15h20M5 19h20M5 23h20" stroke="white" strokeWidth="2" />
          </Icon>
        </button>
        <button type="button" aria-label="Web Layout" className="ml-[18px]">
          <Icon w={34} h={30}>
            <path d="M13 24H2V2h22v9" stroke={g} strokeWidth="2" />
            <path d="M5 7h16M5 11h16M5 15h10M5 19h9" stroke={g} strokeWidth="2" />
            <circle cx="23.500" cy="20.500" r="9" fill={g} />
            <path d="M18 14c3 0 4 2 3 4s-3 1-4 0zM25 20l4-4c2 3 2 6-1 9-2 1-3-3-3-5z" fill="#dcdcdc" />
          </Icon>
        </button>
        <button type="button" aria-label="Outline" className="ml-[39px]">
          <Icon w={32} h={28}>
            <path d="M0 4h4M7 4h15M8 11h4M15 11h15M8 17h4M15 17h15M4 24h4M11 24h15" stroke={g} strokeWidth="2.200" />
          </Icon>
        </button>
        <button type="button" aria-label="Draft" className="ml-10">
          <Icon w={28} h={28}>
            <path d="M0 4h28M0 11h22M0 17h28M0 24h22" stroke={g} strokeWidth="2.200" />
          </Icon>
        </button>
        <button type="button" aria-label="Zoom out" className="ml-[38px]">
          <Icon w={16} h={28}>
            <path d="M0 14h16" stroke="#5c5c5c" strokeWidth="4" />
          </Icon>
        </button>
        <input
          type="range"
          aria-label="Zoom"
          min={0}
          max={100}
          defaultValue={50}
          className="mx-3.5 h-2 w-[200px] appearance-none rounded-full bg-[#9b9b9b] [&::-webkit-slider-thumb]:h-8 [&::-webkit-slider-thumb]:w-8 [&::-webkit-slider-thumb]:appearance-none [&::-webkit-slider-thumb]:rounded-full [&::-webkit-slider-thumb]:bg-white [&::-webkit-slider-thumb]:shadow-[0_1px_3px_rgba(0,0,0,0.4)]"
        />
        <button type="button" aria-label="Zoom in">
          <Icon w={18} h={28}>
            <path d="M0 14h18M9 5v18" stroke="#5c5c5c" strokeWidth="4" />
          </Icon>
        </button>
        <span className="ml-[34px]">100%</span>
      </div>
    </footer>
  );
}

export default function App() {
  return (
    <div className="flex h-screen flex-col overflow-hidden font-['Inter',sans-serif]">
      <TitleBar />
      <div className="shrink-0 bg-linear-to-b from-[#f6f6f6] to-[#ededed]">
        <TabRow />
        <div className="flex h-[148px] items-start">
          <PasteGroup />
          <GroupSep />
          <FontGroup />
          <div className="flex shrink-0 items-start">
            <GroupSep />
            <ParagraphGroup />
          </div>
          <GroupSep />
          <StyleGallery />
          <RightGroups />
        </div>
      </div>
      <Ruler />
      <DocumentArea />
      <StatusBar />
    </div>
  );
}
